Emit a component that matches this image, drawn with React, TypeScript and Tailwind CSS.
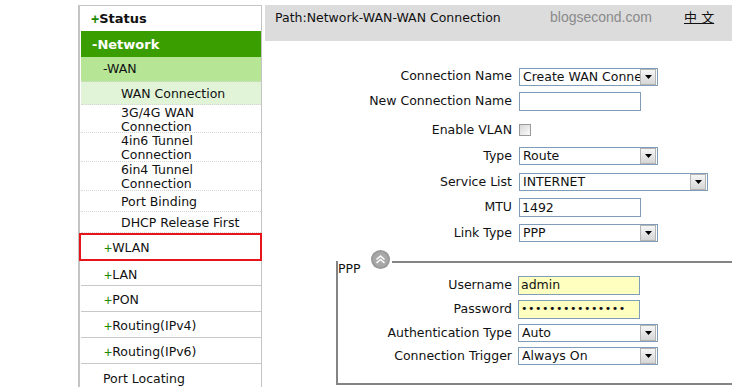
import type { ReactNode } from 'react';

type SubItem = { lines: string[]; h: string; active?: boolean };

const subItems: SubItem[] = [
  { lines: ['WAN Connection'], h: 'h-[23px]', active: true },
  { lines: ['3G/4G WAN', 'Connection'], h: 'h-[28px]' },
  { lines: ['4in6 Tunnel', 'Connection'], h: 'h-[29px]' },
  { lines: ['6in4 Tunnel', 'Connection'], h: 'h-[29px]' },
  { lines: ['Port Binding'], h: 'h-[21px]' },
  { lines: ['DHCP Release First'], h: 'h-[21px]' },
];

const topItems = ['LAN', 'PON', 'Routing(IPv4)', 'Routing(IPv6)'];

function Plus() {
  return <span className="font-['Liberation_Sans',sans-serif] text-[14px] text-[#1d8a00]">+</span>;
}

function Arrow() {
  return (
    <span className="flex h-[16px] w-[16px] shrink-0 items-center justify-center border border-[#b4b4b4] bg-gradient-to-b from-[#f6f6f6] to-[#d6d6d6]">
      <svg width="7" height="4" viewBox="0 0 7 4">
        <path d="M0 0h7L3.5 4z" fill="#000" />
      </svg>
    </span>
  );
}

function Select({ value, w }: { value: string; w: string }) {
  return (
    <div className={`flex h-[18px] items-center border border-[#7f9db9] bg-white pl-[3px] pr-px ${w}`}>
      <span className="min-w-0 flex-1 overflow-hidden whitespace-nowrap leading-[16px]">{value}</span>
      <Arrow />
    </div>
  );
}

function TextBox({ value, yellow }: { value?: string; yellow?: boolean }) {
  return (
    <div
      className={`flex h-[19px] w-[122px] items-center border border-[#7f9db9] pl-[2px] leading-[16px] ${
        yellow ? 'bg-[#ffffc0]' : 'bg-white'
      }`}
    >
      {value}
    </div>
  );
}

function Row({ label, h, children, narrow }: { label: string; h: string; children: ReactNode; narrow?: boolean }) {
  return (
    <div className={`flex items-center ${h}`}>
      <div className={`whitespace-nowrap text-right ${narrow ? 'w-[174px]' : 'w-[247px]'}`}>{label}</div>
      <div className={narrow ? 'ml-[6px]' : 'ml-[7px]'}>{children}</div>
    </div>
  );
}

export default function App() {
  return (
    <div className="flex h-[387px] w-[732px] overflow-hidden bg-white font-['DejaVu_Sans','Liberation_Sans',sans-serif] text-[12.5px] text-[#111]">
      {/* left menu */}
      <div className="ml-[78px] mt-[5px] w-[184px] shrink-0 self-start border-l-2 border-r border-t border-[#c4c4c4] pl-px">
        <div className="flex h-[25px] items-center pl-[10px] pt-px text-[13px] font-bold">
          <Plus />
          Status
        </div>
        <div className="flex h-[26px] items-center bg-[#3b9e00] pl-[11px] pt-px text-[13px] font-bold text-white">-Network</div>
        <div className="flex h-[25px] items-center border-b border-dotted border-[#d6d6d6] bg-[#b6e596] pl-[22px] pt-px">-WAN</div>
        {subItems.map((s) => (
          <div
            key={s.lines[0]}
            className={`flex flex-col justify-center border-b border-dotted border-[#d6d6d6] pl-[40px] pt-[2px] leading-[14px] ${s.h} ${
              s.active ? 'bg-[#e1f4d8]' : ''
            }`}
          >
            {s.lines.map((l) => (
              <span key={l}>{l}</span>
            ))}
          </div>
        ))}
        <div className="-ml-[2px] -mr-px flex h-[28px] items-center border-2 border-[#e8141c] pl-[23px] pt-[3px]">
          <Plus />
          WLAN
        </div>
        {topItems.map((t, i) => (
          <div
            key={t}
            className={`flex items-center border-b border-[#c8c8c8] pl-[23px] pt-[4px] ${i === 0 ? 'h-[25px]' : 'h-[26px]'}`}
          >
            <Plus />
            {t}
          </div>
        ))}
        <div className="flex h-[26px] items-center pl-[22px] pt-[4px]">Port Locating</div>
        <div className="h-[40px]" />
      </div>

      {/* main area */}
      <div className="ml-[3px] w-[467px] shrink-0">
        <div className="mt-[5px] flex h-[36px] items-start bg-[#dcdcdc] pl-[10px] pt-[5px] leading-[15px]">
          <span className="w-[275px] whitespace-nowrap">Path:Network-WAN-WAN Connection</span>
          <span className="w-[134px] font-['Liberation_Sans',sans-serif] text-[14px] text-[#8a8a8a]">blogsecond.com</span>
          <span className="font-['DejaVu_Sans','Noto_Sans_CJK_SC',sans-serif] text-[13px] underline">中 文</span>
        </div>

        <div className="mt-[23px]">
          <Row label="Connection Name" h="h-[25px]">
            <Select value="Create WAN Connection" w="w-[139px]" />
          </Row>
          <Row label="New Connection Name" h="h-[25px]">
            <TextBox />
          </Row>
          <Row label="Enable VLAN" h="mt-[3px] h-[26px]">
            <div className="h-[12px] w-[12px] border border-[#9a9a9a] bg-gradient-to-br from-[#d8d8d8] to-[#fafafa]" />
          </Row>
          <Row label="Type" h="h-[26px]">
            <Select value="Route" w="w-[139px]" />
          </Row>
          <Row label="Service List" h="h-[26px]">
            <Select value="INTERNET" w="w-[189px]" />
          </Row>
          <Row label="MTU" h="h-[25px]">
            <TextBox value="1492" />
          </Row>
          <Row label="Link Type" h="h-[26px]">
            <Select value="PPP" w="w-[139px]" />
          </Row>
        </div>

        {/* PPP group */}
        <div className="ml-[71px] mt-[15px] w-[420px] border-b-2 border-l-2 border-[#848484] pb-[16px]">
          <div className="flex h-[12px] items-start">
            <span className="mt-px w-[33px] leading-[14px]">PPP</span>
            <svg className="-mt-[11px] shrink-0" width="19" height="19" viewBox="0 0 19 19">
              <circle cx="9.5" cy="9.5" r="9.5" fill="#9a9a9a" />
              <circle cx="9.5" cy="9.5" r="7.5" fill="#a8a8a8" />
              <path d="M5.5 9.5l4-3.5 4 3.5M5.5 13l4-3.5 4 3.5" fill="none" stroke="#fff" strokeWidth="1.6" />
            </svg>
            <div className="ml-[2px] flex-1 border-t-2 border-[#848484]" />
          </div>
          <Row label="Username" h="h-[24px]" narrow>
            <TextBox value="admin" yellow />
          </Row>
          <Row label="Password" h="h-[24px]" narrow>
            <div className="flex h-[19px] w-[122px] items-center border border-[#7f9db9] bg-[#ffffc0] pl-[2px] text-[11px] tracking-[0.5px]">
              •••••••••••••••
            </div>
          </Row>
          <Row label="Authentication Type" h="h-[24px]" narrow>
            <Select value="Auto" w="w-[140px]" />
          </Row>
          <Row label="Connection Trigger" h="h-[22px]" narrow>
            <Select value="Always On" w="w-[140px]" />
          </Row>
        </div>
      </div>
    </div>
  );
}
